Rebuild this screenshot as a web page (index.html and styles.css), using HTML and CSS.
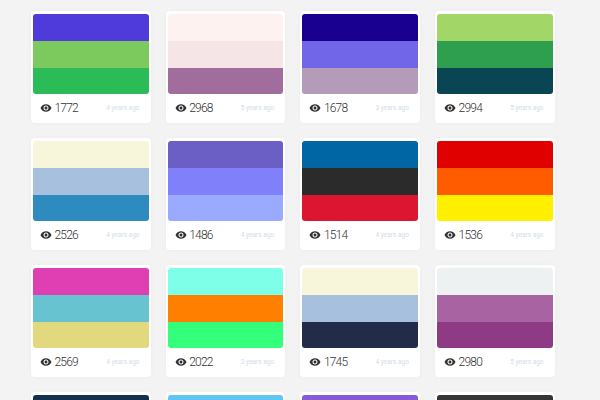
FILE: index.html
```html
<!DOCTYPE html>
<html lang="en">

<head>
    <meta charset="UTF-8">
    <meta name="viewport" content="width=device-width, initial-scale=1.0">
    <title>Color palettes</title>
    <link rel="stylesheet" href="styles.css">
</head>

<body>
    <svg class="icon-defs" width="0" height="0">
        <symbol id="eye" viewBox="0 0 24 24">
            <path d="M12 4.500C7 4.500 2.730 7.610 1 12c1.730 4.390 6 7.500 11 7.500s9.270-3.110 11-7.500c-1.730-4.390-6-7.500-11-7.500zM12 17c-2.760 0-5-2.240-5-5s2.240-5 5-5 5 2.240 5 5-2.240 5-5 5zm0-8c-1.660 0-3 1.340-3 3s1.340 3 3 3 3-1.340 3-3-1.340-3-3-3z"/>
        </symbol>
    </svg>
    <main class="grid">
        <div class="card">
            <div class="palette"><i class="b1" style="background:#4f3bdc"></i><i class="b2" style="background:#7cc95e"></i><i class="b3" style="background:#2bbb57"></i></div>
            <div class="meta"><svg class="eye"><use href="#eye"/></svg><span class="views">1772</span><span class="age">4 years ago</span></div>
        </div>
        <div class="card">
            <div class="palette"><i class="b1" style="background:#fdf2f0"></i><i class="b2" style="background:#f6e5e6"></i><i class="b3" style="background:#a06d9d"></i></div>
            <div class="meta"><svg class="eye"><use href="#eye"/></svg><span class="views">2968</span><span class="age">5 years ago</span></div>
        </div>
        <div class="card">
            <div class="palette"><i class="b1" style="background:#190091"></i><i class="b2" style="background:#7165e8"></i><i class="b3" style="background:#b39bb9"></i></div>
            <div class="meta"><svg class="eye"><use href="#eye"/></svg><span class="views">1678</span><span class="age">3 years ago</span></div>
        </div>
        <div class="card">
            <div class="palette"><i class="b1" style="background:#a2d768"></i><i class="b2" style="background:#2e9e4f"></i><i class="b3" style="background:#094552"></i></div>
            <div class="meta"><svg class="eye"><use href="#eye"/></svg><span class="views">2994</span><span class="age">5 years ago</span></div>
        </div>

        <div class="card">
            <div class="palette"><i class="b1" style="background:#f7f6da"></i><i class="b2" style="background:#a6c0de"></i><i class="b3" style="background:#2e8bbf"></i></div>
            <div class="meta"><svg class="eye"><use href="#eye"/></svg><span class="views">2526</span><span class="age">4 years ago</span></div>
        </div>
        <div class="card">
            <div class="palette"><i class="b1" style="background:#6b5ec4"></i><i class="b2" style="background:#8080fa"></i><i class="b3" style="background:#9aaaff"></i></div>
            <div class="meta"><svg class="eye"><use href="#eye"/></svg><span class="views">1486</span><span class="age">4 years ago</span></div>
        </div>
        <div class="card">
            <div class="palette"><i class="b1" style="background:#0066a4"></i><i class="b2" style="background:#2b2b2b"></i><i class="b3" style="background:#dc1631"></i></div>
            <div class="meta"><svg class="eye"><use href="#eye"/></svg><span class="views">1514</span><span class="age">4 years ago</span></div>
        </div>
        <div class="card">
            <div class="palette"><i class="b1" style="background:#e00000"></i><i class="b2" style="background:#ff5c00"></i><i class="b3" style="background:#fff000"></i></div>
            <div class="meta"><svg class="eye"><use href="#eye"/></svg><span class="views">1536</span><span class="age">4 years ago</span></div>
        </div>

        <div class="card">
            <div class="palette"><i class="b1" style="background:#e03fb4"></i><i class="b2" style="background:#66c3cf"></i><i class="b3" style="background:#e2d97f"></i></div>
            <div class="meta"><svg class="eye"><use href="#eye"/></svg><span class="views">2569</span><span class="age">4 years ago</span></div>
        </div>
        <div class="card">
            <div class="palette"><i class="b1" style="background:#7dffe8"></i><i class="b2" style="background:#ff8000"></i><i class="b3" style="background:#33ff7a"></i></div>
            <div class="meta"><svg class="eye"><use href="#eye"/></svg><span class="views">2022</span><span class="age">3 years ago</span></div>
        </div>
        <div class="card">
            <div class="palette"><i class="b1" style="background:#f7f6da"></i><i class="b2" style="background:#a6c0de"></i><i class="b3" style="background:#222b47"></i></div>
            <div class="meta"><svg class="eye"><use href="#eye"/></svg><span class="views">1745</span><span class="age">4 years ago</span></div>
        </div>
        <div class="card">
            <div class="palette"><i class="b1" style="background:#eef1f1"></i><i class="b2" style="background:#a863a3"></i><i class="b3" style="background:#8e3a84"></i></div>
            <div class="meta"><svg class="eye"><use href="#eye"/></svg><span class="views">2980</span><span class="age">5 years ago</span></div>
        </div>

        <div class="card">
            <div class="palette"><i class="b1" style="background:#14304f"></i></div>
        </div>
        <div class="card">
            <div class="palette"><i class="b1" style="background:#5fc6f4"></i></div>
        </div>
        <div class="card">
            <div class="palette"><i class="b1" style="background:#855bd8"></i></div>
        </div>
        <div class="card">
            <div class="palette"><i class="b1" style="background:#353535"></i></div>
        </div>
    </main>
</body>

</html>
```

FILE: styles.css
```css
html {
    overflow: hidden;
}

body {
    margin: 0;
    background-color: #f3f3f3;
    font-family: Roboto, "Noto Sans", sans-serif;
}

.icon-defs {
    display: block;
}

.grid {
    display: grid;
    grid-template-columns: repeat(4, 119.5px);
    column-gap: 15.2px;
    row-gap: 15.5px;
    padding: 11px 0 0 31px;
}

.card {
    background: #fff;
    border-radius: 4px;
    padding: 3px 2px 0;
    height: 108.5px;
    box-shadow: 0 0 4px rgba(0, 0, 0, 0.03);
}

.palette {
    display: flex;
    flex-direction: column;
    height: 79.5px;
    border-radius: 3px;
    overflow: hidden;
}

.palette i {
    display: block;
}

.b1,
.b2 {
    height: 27px;
}

.b3 {
    height: 25.5px;
}

.meta {
    display: flex;
    align-items: center;
    height: 28px;
    padding: 0 9px 0 7px;
}

.eye {
    width: 12px;
    height: 12px;
    fill: #333;
    margin-right: 2.5px;
}

.views {
    font-size: 12px;
    font-weight: 300;
    letter-spacing: -0.8px;
    color: #333;
}

.age {
    margin-left: auto;
    font-size: 6.5px;
    color: #d3dcea;
}
```
